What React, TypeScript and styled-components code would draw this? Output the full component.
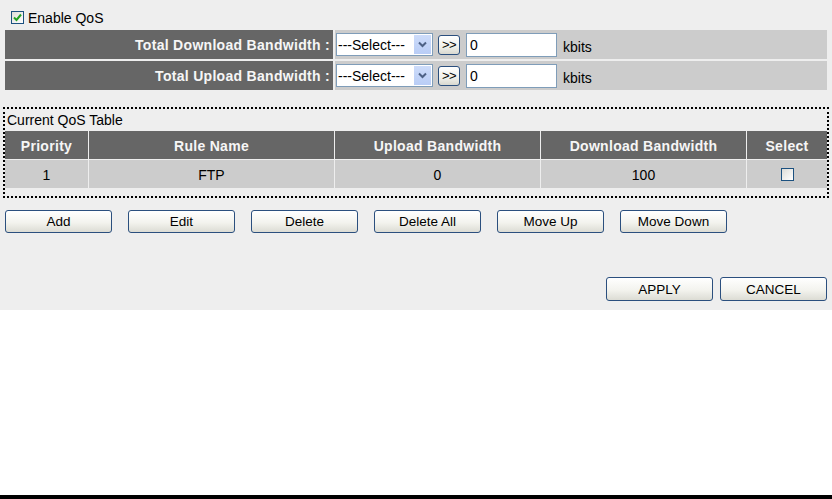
import React from "react";
import styled, { createGlobalStyle } from "styled-components";

const Global = createGlobalStyle`
  html, body, #root { margin: 0; padding: 0; height: 100%; }
  body { background: #ffffff; font-family: "Liberation Sans", Arial, sans-serif; font-size: 14px; color: #000; }
  * { box-sizing: border-box; }
`;

const Page = styled.div`
  display: flex;
  flex-direction: column;
  height: 100%;
`;

const Panel = styled.div`
  height: 310px;
  background: #eeeeee;
  padding: 11px 5px 0 5px;
  display: flex;
  flex-direction: column;
`;

const Spacer = styled.div`
  flex: 1;
`;

const Bar = styled.div`
  height: 4px;
  background: #000;
`;

const EnableRow = styled.label`
  display: flex;
  align-items: center;
  gap: 4px;
  height: 13px;
  padding-left: 6px;
  font-size: 14px;
`;

const CheckBox = styled.span`
  width: 13px;
  height: 13px;
  border: 1px solid #1c5180;
  background: linear-gradient(135deg, #dcdcd7 0%, #ffffff 100%);
  display: inline-flex;
  align-items: center;
  justify-content: center;
`;

const BandTable = styled.div`
  margin-top: 6px;
  display: grid;
  grid-template-columns: 328px 1fr;
  grid-auto-rows: 29px;
  column-gap: 2px;
  row-gap: 2px;
`;

const LabelCell = styled.div`
  background: #666666;
  color: #f6f6f6;
  font-weight: bold;
  font-size: 14px;
  display: flex;
  align-items: center;
  justify-content: flex-end;
  padding-right: 3px;
  padding-top: 1px;
  letter-spacing: 0.3px;
`;

const ValueCell = styled.div`
  background: #cccccc;
  display: flex;
  align-items: center;
  padding-left: 1px;
`;

const SelectBox = styled.div`
  width: 97px;
  height: 23px;
  border: 1px solid #7f9db9;
  background: #fff;
  display: flex;
  align-items: stretch;
`;

const SelectText = styled.span`
  flex: 1;
  display: flex;
  align-items: center;
  padding-left: 1px;
  font-size: 14px;
  white-space: nowrap;
  overflow: hidden;
`;

const SelectArrow = styled.span`
  width: 17px;
  margin: 1px;
  background: linear-gradient(180deg, #cddcfa 0%, #b9cdf6 100%);
  display: flex;
  align-items: center;
  justify-content: center;
`;

const SmallButton = styled.button`
  margin-left: 5px;
  width: 22px;
  height: 20px;
  padding: 0;
  border: 1px solid #2b4f7e;
  border-radius: 3px;
  background: linear-gradient(180deg, #ffffff 0%, #f0f0ea 60%, #d8d8d0 100%);
  font-family: "Liberation Sans", Arial, sans-serif;
  font-size: 13px;
  letter-spacing: -0.5px;
  color: #000;
`;

const TextInput = styled.div`
  margin-left: 6px;
  width: 91px;
  height: 24px;
  border: 1px solid #7f9db9;
  background: #fff;
  display: flex;
  align-items: center;
  padding-left: 3px;
  font-size: 14px;
`;

const Unit = styled.span`
  margin-left: 6px;
  padding-top: 5px;
  font-size: 14px;
`;

const QosBox = styled.div`
  margin: 17px -2px 0 -2px;
  border: 2px dotted #000;
  padding: 3px 0 8px 0;
`;

const QosTitle = styled.div`
  height: 16px;
  padding-left: 2px;
  font-size: 14px;
  display: flex;
  align-items: center;
`;

const QosGrid = styled.div`
  margin-top: 3px;
  display: grid;
  grid-template-columns: 83px 245px 205px 205px 1fr;
  grid-auto-rows: 28px;
  column-gap: 1px;
  row-gap: 1px;
`;

const HeadCell = styled.div`
  background: #666666;
  color: #f6f6f6;
  font-weight: bold;
  font-size: 14px;
  letter-spacing: 0.3px;
  display: flex;
  align-items: center;
  justify-content: center;
  padding-top: 1px;
`;

const DataCell = styled.div`
  background: #cccccc;
  font-size: 14px;
  display: flex;
  align-items: center;
  justify-content: center;
  padding-top: 1px;
`;

const RowCheck = styled.span`
  width: 13px;
  height: 13px;
  border: 1px solid #1c5180;
  background: linear-gradient(135deg, #dcdcd7 0%, #ffffff 100%);
`;

const ButtonRow = styled.div<{ $gap: number; $justify?: string; $top: number }>`
  display: flex;
  gap: ${(p) => p.$gap}px;
  justify-content: ${(p) => p.$justify || "flex-start"};
  margin-top: ${(p) => p.$top}px;
`;

const ActionButton = styled.button<{ $h?: number }>`
  width: 107px;
  height: ${(p) => p.$h || 23}px;
  padding: 0;
  border: 1px solid #2b4f7e;
  border-radius: 3px;
  background: linear-gradient(180deg, #ffffff 0%, #f3f3ee 55%, #dcdcd4 100%);
  font-family: "Liberation Sans", Arial, sans-serif;
  font-size: 13.5px;
  color: #000;
`;

const Check = () => (
  <svg width="11" height="11" viewBox="0 0 11 11">
    <path d="M2 5.5 L4.5 8 L9 2.5" fill="none" stroke="#21a121" strokeWidth="2" />
  </svg>
);

const Chevron = () => (
  <svg width="9" height="7" viewBox="0 0 9 7">
    <path d="M1 1.5 L4.5 5 L8 1.5" fill="none" stroke="#4d6185" strokeWidth="2" />
  </svg>
);

const BandRow = ({ label }: { label: string }) => (
  <>
    <LabelCell>{label}</LabelCell>
    <ValueCell>
      <SelectBox>
        <SelectText>---Select---</SelectText>
        <SelectArrow>
          <Chevron />
        </SelectArrow>
      </SelectBox>
      <SmallButton>&gt;&gt;</SmallButton>
      <TextInput>0</TextInput>
      <Unit>kbits</Unit>
    </ValueCell>
  </>
);

export default function App() {
  return (
    <Page>
      <Global />
      <Panel>
        <EnableRow>
          <CheckBox>
            <Check />
          </CheckBox>
          Enable QoS
        </EnableRow>
        <BandTable>
          <BandRow label="Total Download Bandwidth :" />
          <BandRow label="Total Upload Bandwidth :" />
        </BandTable>
        <QosBox>
          <QosTitle>Current QoS Table</QosTitle>
          <QosGrid>
            <HeadCell>Priority</HeadCell>
            <HeadCell>Rule Name</HeadCell>
            <HeadCell>Upload Bandwidth</HeadCell>
            <HeadCell>Download Bandwidth</HeadCell>
            <HeadCell>Select</HeadCell>
            <DataCell>1</DataCell>
            <DataCell>FTP</DataCell>
            <DataCell>0</DataCell>
            <DataCell>100</DataCell>
            <DataCell>
              <RowCheck />
            </DataCell>
          </QosGrid>
        </QosBox>
        <ButtonRow $gap={16} $top={12}>
          {["Add", "Edit", "Delete", "Delete All", "Move Up", "Move Down"].map((t) => (
            <ActionButton key={t}>{t}</ActionButton>
          ))}
        </ButtonRow>
        <ButtonRow $gap={7} $justify="flex-end" $top={44}>
          <ActionButton $h={24}>APPLY</ActionButton>
          <ActionButton $h={24}>CANCEL</ActionButton>
        </ButtonRow>
      </Panel>
      <Spacer />
      <Bar />
    </Page>
  );
}
